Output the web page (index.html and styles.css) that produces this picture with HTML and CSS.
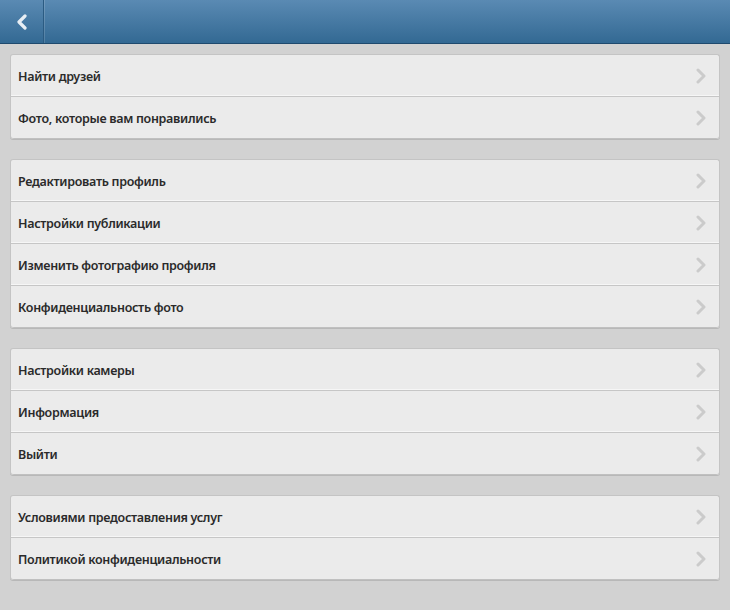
FILE: index.html
```html
<!DOCTYPE html>
<html lang="ru">
<head>
<meta charset="utf-8">
<title>Настройки</title>
<link rel="stylesheet" href="styles.css">
</head>
<body>
<header class="topbar">
  <div class="back">
    <svg width="14" height="16" viewBox="0 0 14 16"><path d="M10 2 L4 8 L10 14" fill="none" stroke="#e8eef4" stroke-width="3.2" stroke-linecap="round" stroke-linejoin="round"/></svg>
  </div>
  <div class="title"></div>
</header>
<main class="content">
  <ul class="group">
    <li class="row"><span>Найти друзей</span><svg class="chev" width="12" height="16" viewBox="0 0 12 16"><path d="M3 2 L9 8 L3 14" /></svg></li>
    <li class="row"><span>Фото, которые вам понравились</span><svg class="chev" width="12" height="16" viewBox="0 0 12 16"><path d="M3 2 L9 8 L3 14" /></svg></li>
  </ul>
  <ul class="group">
    <li class="row"><span>Редактировать профиль</span><svg class="chev" width="12" height="16" viewBox="0 0 12 16"><path d="M3 2 L9 8 L3 14" /></svg></li>
    <li class="row"><span>Настройки публикации</span><svg class="chev" width="12" height="16" viewBox="0 0 12 16"><path d="M3 2 L9 8 L3 14" /></svg></li>
    <li class="row"><span>Изменить фотографию профиля</span><svg class="chev" width="12" height="16" viewBox="0 0 12 16"><path d="M3 2 L9 8 L3 14" /></svg></li>
    <li class="row"><span>Конфиденциальность фото</span><svg class="chev" width="12" height="16" viewBox="0 0 12 16"><path d="M3 2 L9 8 L3 14" /></svg></li>
  </ul>
  <ul class="group">
    <li class="row"><span>Настройки камеры</span><svg class="chev" width="12" height="16" viewBox="0 0 12 16"><path d="M3 2 L9 8 L3 14" /></svg></li>
    <li class="row"><span>Информация</span><svg class="chev" width="12" height="16" viewBox="0 0 12 16"><path d="M3 2 L9 8 L3 14" /></svg></li>
    <li class="row"><span>Выйти</span><svg class="chev" width="12" height="16" viewBox="0 0 12 16"><path d="M3 2 L9 8 L3 14" /></svg></li>
  </ul>
  <ul class="group">
    <li class="row"><span>Условиями предоставления услуг</span><svg class="chev" width="12" height="16" viewBox="0 0 12 16"><path d="M3 2 L9 8 L3 14" /></svg></li>
    <li class="row"><span>Политикой конфиденциальности</span><svg class="chev" width="12" height="16" viewBox="0 0 12 16"><path d="M3 2 L9 8 L3 14" /></svg></li>
  </ul>
</main>
</body>
</html>
```
FILE: styles.css
```css
html, body {
  margin: 0;
  padding: 0;
  height: 100%;
}
body {
  background: #d2d2d2;
  font-family: "Noto Sans", "DejaVu Sans", sans-serif;
  overflow: hidden;
}
.topbar {
  display: flex;
  height: 43px;
  background: linear-gradient(#5a8ab3, #336993);
  border-bottom: 1px solid #1f4a6e;
}
.back {
  width: 43px;
  display: flex;
  align-items: center;
  justify-content: center;
  border-right: 1px solid #2b5b82;
  box-shadow: 1px 0 0 rgba(255,255,255,0.15);
}
.title { flex: 1; }
.content {
  padding: 10px 10px 0 10px;
  display: flex;
  flex-direction: column;
  gap: 20px;
}
.group {
  list-style: none;
  margin: 0;
  padding: 0;
  background: #ebebeb;
  border: 1px solid #c4c4c4;
  border-bottom: none;
  border-radius: 3px;
  box-shadow: 0 1px 0 #b8b8b8;
}
.row {
  height: 41px;
  display: flex;
  align-items: center;
  justify-content: space-between;
  padding: 0 12px 0 7px;
  border-bottom: 1px solid #c6c6c6;
  box-shadow: inset 0 -1px 0 #f6f6f6;
  font-size: 12.5px;
  font-weight: 600;
  letter-spacing: -0.3px;
  color: #2a2a2a;
}
.row span { padding-top: 1px; }
.row:last-child {
  box-shadow: none;
  border-bottom: 1px solid #c0c0c0;
  border-radius: 0 0 3px 3px;
}
.chev path {
  fill: none;
  stroke: #cbcbcb;
  stroke-width: 3;
  stroke-linecap: round;
  stroke-linejoin: round;
}
```
